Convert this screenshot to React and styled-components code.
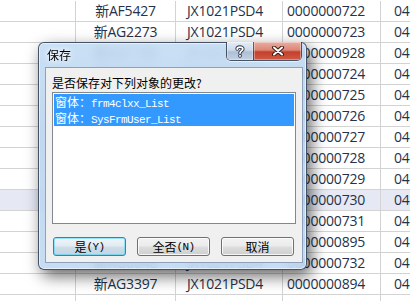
import styled, { createGlobalStyle } from "styled-components";

const GlobalStyle = createGlobalStyle`
  html, body {
    margin: 0;
    padding: 0;
    background: #fff;
    overflow: hidden;
  }
`;

const Page = styled.div`
  position: relative;
  width: 410px;
  height: 301px;
  overflow: hidden;
  background: #fff;
`;

const Sheet = styled.div`
  padding-top: 1px;
`;

const Row = styled.div`
  display: grid;
  grid-template-columns: 76px 100px 107px 98px 100px;
  height: 21px;
  background: ${(p) => (p.$active ? "#e6e9f4" : "#fff")};
`;

const Cell = styled.div`
  box-sizing: border-box;
  height: 21px;
  line-height: 20px;
  border-right: 1px solid #d3d3d3;
  border-bottom: 1px solid #d3d3d3;
  padding-left: ${(p) => p.$pad || 0}px;
  text-align: ${(p) => (p.$center ? "center" : "left")};
  font-family: "Open Sans", "Noto Sans CJK SC", sans-serif;
  font-size: 14px;
  letter-spacing: -0.2px;
  color: #25324a;
  white-space: nowrap;
  overflow: hidden;
`;

const Dialog = styled.div`
  position: absolute;
  left: 38px;
  top: 42px;
  width: 269px;
  height: 228px;
  box-sizing: border-box;
  display: flex;
  flex-direction: column;
  border: 1px solid rgba(38, 48, 66, 0.8);
  border-radius: 6px;
  background: linear-gradient(
    180deg,
    rgba(194, 219, 243, 0.88) 0%,
    rgba(184, 211, 238, 0.88) 40%,
    rgba(190, 216, 241, 0.88) 100%
  );
  backdrop-filter: blur(5px);
  box-shadow: inset 0 0 0 1px rgba(255, 255, 255, 0.55),
    4px 6px 16px rgba(0, 0, 0, 0.6);
`;

const TitleBar = styled.div`
  height: 24px;
  flex: none;
  display: flex;
  align-items: flex-start;
  justify-content: space-between;
  padding: 0 4px 0 8px;
`;

const Title = styled.span`
  margin-top: 5px;
  font-family: "Noto Sans CJK SC", sans-serif;
  font-size: 12px;
  line-height: 14px;
  color: #000;
  text-shadow: 0 0 4px #fff, 0 0 6px rgba(255, 255, 255, 0.9);
`;

const Caption = styled.div`
  display: flex;
  margin-top: -1px;
  border: 1px solid rgba(50, 58, 74, 0.85);
  border-top: none;
  border-radius: 0 0 5px 5px;
  overflow: hidden;
  box-shadow: 0 1px 0 rgba(255, 255, 255, 0.6);
`;

const CapButton = styled.div`
  width: ${(p) => p.$w}px;
  height: 18px;
  display: flex;
  align-items: center;
  justify-content: center;
  box-shadow: inset 0 0 0 1px rgba(255, 255, 255, 0.35);
  background: ${(p) =>
    p.$close
      ? "linear-gradient(180deg, #e9ada2 0%, #dc8676 45%, #c4402c 55%, #cf5a45 100%)"
      : "linear-gradient(180deg, #e3ecf6 0%, #ccdaea 45%, #aebfd5 55%, #c2d2e4 100%)"};
  & + & {
    border-left: 1px solid rgba(50, 58, 74, 0.7);
  }
`;

const Client = styled.div`
  flex: 1;
  margin: 0 3px 6px 6px;
  box-sizing: border-box;
  display: flex;
  flex-direction: column;
  padding: 8px 6px 6px 6px;
  background: #f0f0f0;
  border: 1px solid #8da2ba;
`;

const Prompt = styled.div`
  font-family: "Noto Sans CJK SC", sans-serif;
  font-size: 12px;
  line-height: 14px;
  color: #000;
  margin-bottom: 2px;
`;

const ListBox = styled.div`
  height: 132px;
  box-sizing: border-box;
  padding: 1px;
  background: #fff;
  border: 1px solid #828790;
`;

const Item = styled.div`
  height: 16px;
  line-height: 16px;
  padding-left: 1px;
  background: #3399ff;
  color: #fff;
  font-family: "Noto Sans CJK SC", sans-serif;
  font-size: 12px;
  white-space: nowrap;
`;

const Code = styled.span`
  font-family: "Liberation Mono", monospace;
  font-size: 11px;
  letter-spacing: -0.6px;
`;

const Buttons = styled.div`
  display: flex;
  gap: 11px;
  margin-top: 13px;
  padding-left: 1px;
`;

const Button = styled.div`
  width: 73px;
  height: 19px;
  box-sizing: border-box;
  display: flex;
  align-items: center;
  justify-content: center;
  border-radius: 3px;
  border: 1px solid ${(p) => (p.$default ? "#3c7fb1" : "#707070")};
  box-shadow: inset 0 0 0 1px
    ${(p) => (p.$default ? "rgba(72, 215, 251, 0.55)" : "rgba(255, 255, 255, 0.8)")};
  background: ${(p) =>
    p.$default
      ? "linear-gradient(180deg, #eef5fa 0%, #e1ebf3 48%, #cfdde8 52%, #c3d4e1 100%)"
      : "linear-gradient(180deg, #f2f2f2 0%, #ebebeb 48%, #dddddd 52%, #cfcfcf 100%)"};
  font-family: "Noto Sans CJK SC", sans-serif;
  font-size: 12px;
  color: #000;
`;

const Key = styled.span`
  font-family: "Liberation Mono", monospace;
  font-size: 11px;
  letter-spacing: -0.6px;
`;

const rows = [
  ["新AF5427", "JX1021PSD4", "0000000722", "04"],
  ["新AG2273", "JX1021PSD4", "0000000723", "04"],
  ["新AG1186", "JX1021PSD4", "0000000928", "04"],
  ["新AF6012", "JX1021PSD4", "0000000724", "04"],
  ["新AG0931", "JX1021PSD4", "0000000725", "04"],
  ["新AF7730", "JX1021PSD4", "0000000726", "04"],
  ["新AG2215", "JX1021PSD4", "0000000727", "04"],
  ["新AF3094", "JX1021PSD4", "0000000728", "04"],
  ["新AG4470", "JX1021PSD4", "0000000729", "04"],
  ["新AF8136", "JX1021PSD4", "0000000730", "04"],
  ["新AG1952", "JX1021PSD4", "0000000731", "04"],
  ["新AF2281", "JX1021PSD4", "0000000895", "04"],
  ["新AG0648", "JX1021PSD4", "0000000732", "04"],
  ["新AG3397", "JX1021PSD4", "0000000894", "04"],
  ["", "", "", ""],
];

const CloseGlyph = () => (
  <svg width="14" height="10" viewBox="0 0 14 10">
    <path d="M3 1.5 L11 8.5 M11 1.5 L3 8.5" stroke="#3b1c16" strokeWidth="4" strokeLinecap="round" />
    <path d="M3 1.5 L11 8.5 M11 1.5 L3 8.5" stroke="#fff" strokeWidth="2" strokeLinecap="round" />
  </svg>
);

const HelpGlyph = () => (
  <svg width="10" height="13" viewBox="0 0 10 13">
    <path
      d="M2.2 4 C2.2 1.6 7.8 1.4 7.8 4 C7.8 5.8 5 6 5 8 M5 10.6 L5 11"
      fill="none"
      stroke="#2c3444"
      strokeWidth="3.6"
      strokeLinecap="round"
    />
    <path
      d="M2.2 4 C2.2 1.6 7.8 1.4 7.8 4 C7.8 5.8 5 6 5 8 M5 10.6 L5 11"
      fill="none"
      stroke="#fff"
      strokeWidth="1.8"
      strokeLinecap="round"
    />
  </svg>
);

export default function App() {
  return (
    <Page>
      <GlobalStyle />
      <Sheet>
        {rows.map((r, i) => (
          <Row key={i} $active={i === 9}>
            <Cell />
            <Cell $center>{r[0]}</Cell>
            <Cell $pad={11}>{r[1]}</Cell>
            <Cell $pad={4}>{r[2]}</Cell>
            <Cell $pad={13}>{r[3]}</Cell>
          </Row>
        ))}
      </Sheet>

      <Dialog>
        <TitleBar>
          <Title>保存</Title>
          <Caption>
            <CapButton $w={26}>
              <HelpGlyph />
            </CapButton>
            <CapButton $w={47} $close>
              <CloseGlyph />
            </CapButton>
          </Caption>
        </TitleBar>
        <Client>
          <Prompt>是否保存对下列对象的更改?</Prompt>
          <ListBox>
            <Item>
              窗体：<Code>frm4clxx_List</Code>
            </Item>
            <Item>
              窗体：<Code>SysFrmUser_List</Code>
            </Item>
          </ListBox>
          <Buttons>
            <Button $default>
              是<Key>(Y)</Key>
            </Button>
            <Button>
              全否<Key>(N)</Key>
            </Button>
            <Button>取消</Button>
          </Buttons>
        </Client>
      </Dialog>
    </Page>
  );
}
